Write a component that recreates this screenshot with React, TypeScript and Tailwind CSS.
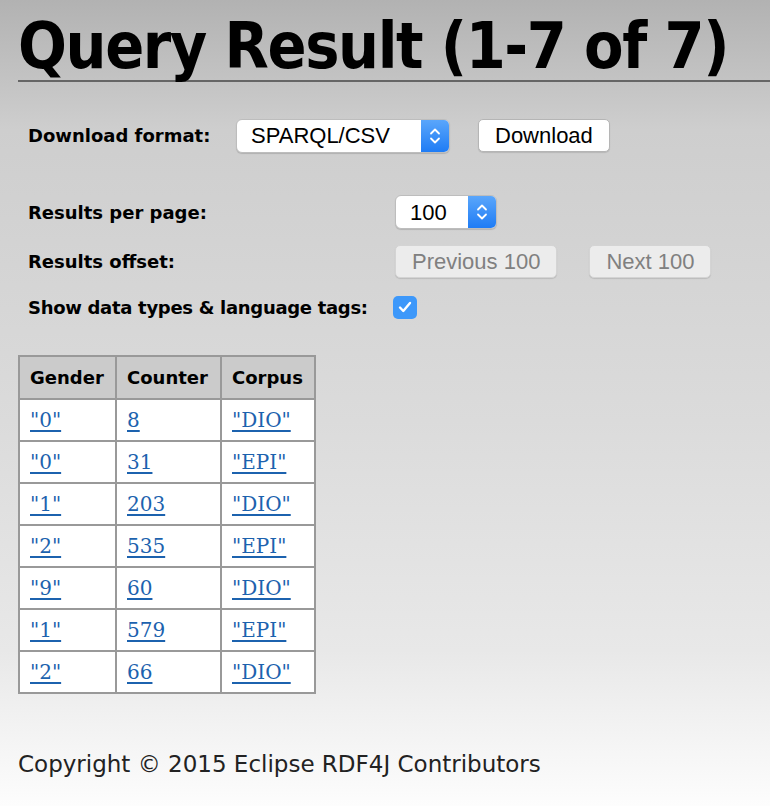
const rows = [
  ['"0"', "8", '"DIO"'],
  ['"0"', "31", '"EPI"'],
  ['"1"', "203", '"DIO"'],
  ['"2"', "535", '"EPI"'],
  ['"9"', "60", '"DIO"'],
  ['"1"', "579", '"EPI"'],
  ['"2"', "66", '"DIO"'],
];

const SelectArrow = () => (
  <span className="flex h-full w-[28px] items-center justify-center rounded-r-[5px] bg-[linear-gradient(to_bottom,#5aa6fb,#1f7cf5)]">
    <svg width="12" height="20" viewBox="0 0 12 20" fill="none" stroke="white" strokeWidth="1.8" strokeLinecap="round" strokeLinejoin="round">
      <path d="M2 7.5 L6 3.5 L10 7.5" />
      <path d="M2 12.5 L6 16.5 L10 12.5" />
    </svg>
  </span>
);

const Select = ({ value, width }: { value: string; width: string }) => (
  <div
    className={`flex h-[34px] ${width} items-stretch rounded-[6px] border border-[#bdbdbd] bg-white shadow-[0_1px_1px_rgba(0,0,0,0.15)]`}
  >
    <span className="flex flex-1 items-center pl-[14px] font-['Liberation_Sans',sans-serif] text-[22px] text-black">
      {value}
    </span>
    <SelectArrow />
  </div>
);

const Button = ({ label, disabled }: { label: string; disabled?: boolean }) => (
  <button
    className={`flex h-[33px] items-center rounded-[5px] border px-[16px] font-['Liberation_Sans',sans-serif] text-[22px] shadow-[0_1px_1px_rgba(0,0,0,0.12)] ${
      disabled
        ? "border-[#d4d4d4] bg-[#ececec] text-[#808080]"
        : "border-[#b5b5b5] bg-white text-black"
    }`}
  >
    {label}
  </button>
);

export default function App() {
  return (
    <div className="min-h-[806px] bg-[linear-gradient(to_bottom,#b2b2b2_0px,#cecece_130px,#dbdbdb_420px,#e8e8e8_650px,#fdfdfd_806px)] font-['DejaVu_Sans',sans-serif] text-black">
      <h1 className="ml-[18px] border-b-2 border-[#666] pt-[14px] pb-[2px] font-['DejaVu_Sans_Condensed',sans-serif] text-[64px] font-bold leading-[64px] tracking-[-1.4px]">
        Query Result (1-7 of 7)
      </h1>

      <div className="ml-[28px] mt-[36px] flex h-[35px] items-center">
        <span className="w-[208px] text-[18px] font-bold">Download format:</span>
        <Select value="SPARQL/CSV" width="w-[214px]" />
        <span className="ml-[28px]">
          <Button label="Download" />
        </span>
      </div>

      <div className="ml-[28px] mt-[42px] flex flex-col">
        <div className="flex h-[34px] items-center">
          <span className="w-[367px] text-[18px] font-bold">Results per page:</span>
          <Select value="100" width="w-[102px]" />
        </div>
        <div className="mt-[16px] flex h-[32px] items-center">
          <span className="w-[367px] text-[18px] font-bold">Results offset:</span>
          <Button label="Previous 100" disabled />
          <span className="ml-[32px]">
            <Button label="Next 100" disabled />
          </span>
        </div>
        <div className="mt-[14px] flex h-[32px] items-center">
          <span className="w-[365px] text-[18px] font-bold tracking-[-0.3px]">Show data types &amp; language tags:</span>
          <span className="flex h-[23px] w-[24px] items-center justify-center rounded-[5px] bg-[#3d98fa]">
            <svg width="14" height="12" viewBox="0 0 14 12" fill="none" stroke="white" strokeWidth="2.4" strokeLinecap="round" strokeLinejoin="round">
              <path d="M2 6.5 L5.3 10 L12 2" />
            </svg>
          </span>
        </div>
      </div>

      <table className="ml-[18px] mt-[32px] border-collapse border-2 border-[#999]">
        <thead>
          <tr className="h-[43px] bg-[#cbcbcb]">
            <th className="w-[97px] border-2 border-[#999] px-[10px] text-left text-[18px] font-bold">Gender</th>
            <th className="w-[105px] border-2 border-[#999] px-[10px] text-left text-[18px] font-bold">Counter</th>
            <th className="w-[94px] border-2 border-[#999] px-[10px] text-left text-[18px] font-bold">Corpus</th>
          </tr>
        </thead>
        <tbody>
          {rows.map((r, i) => (
            <tr key={i} className="h-[42px] bg-white">
              {r.map((c, j) => (
                <td key={j} className="border-2 border-[#999] px-[10px] text-left">
                  <a href="#" className="font-['DejaVu_Serif',serif] text-[20px] text-[#1c62ae] underline underline-offset-[3px]">
                    {c}
                  </a>
                </td>
              ))}
            </tr>
          ))}
        </tbody>
      </table>

      <p className="ml-[18px] mt-[56px] text-[23px] leading-[28px] text-[#222]">
        Copyright © 2015 Eclipse RDF4J Contributors
      </p>
    </div>
  );
}
